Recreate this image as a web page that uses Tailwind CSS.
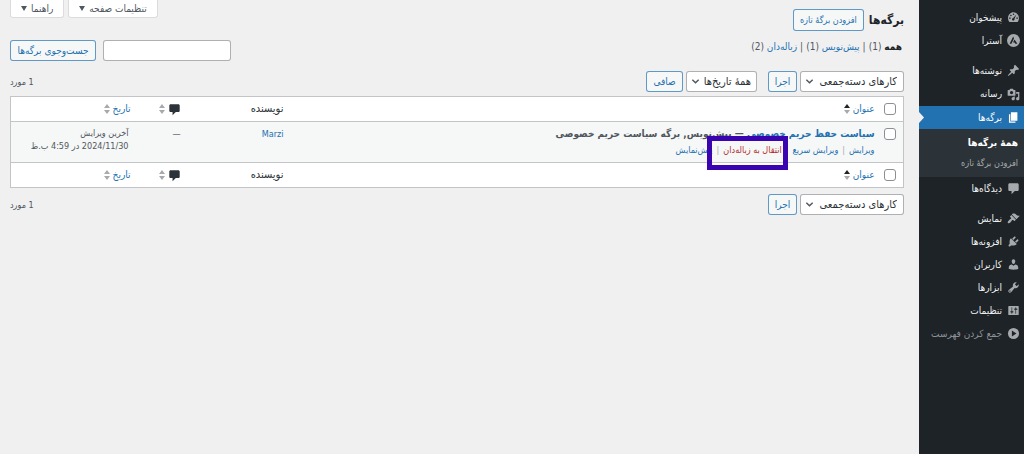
<!DOCTYPE html>
<html lang="fa" dir="rtl">

<head>
    <meta charset="UTF-8">
    <meta name="viewport" content="width=device-width, initial-scale=1.0">
    <title>برگه‌ها</title>
    <script src="https://cdn.jsdelivr.net/npm/@tailwindcss/browser@4"></script>
</head>

<body class="flex min-h-screen bg-[#f0f0f1] font-['DejaVu_Sans_Condensed','DejaVu_Sans',sans-serif] text-[10px] leading-[14px] text-[#50575e]">
    <!-- Shared icon shapes -->
    <svg class="hidden">
        <symbol id="bubble" viewBox="0 0 20 20">
            <path d="M4 2h12c1.100 0 2 .9 2 2v8c0 1.100-.9 2-2 2h-4l-5 5v-5H4c-1.100 0-2-.9-2-2V4c0-1.100.9-2 2-2z" />
        </symbol>
        <symbol id="chevron" viewBox="0 0 10 10">
            <path d="M1.500 3L5 6.500 8.500 3" fill="none" stroke="#50575e" stroke-width="1.600" />
        </symbol>
        <symbol id="sort" viewBox="0 0 6 10">
            <path d="M3 0L6 4H0z" />
            <path d="M0 6h6L3 10z" fill="#a7aaad" />
        </symbol>
    </svg>

    <!-- Admin menu -->
    <nav class="w-[105px] shrink-0 bg-[#1d2327] pt-[6px] text-[#f0f0f1]">
        <a href="#" class="flex h-[23px] items-center gap-[5px] pr-1">
            <svg class="size-[13px] shrink-0 fill-[#a7aaad]" viewBox="0 0 20 20">
                <path d="M3.760 17h12.480c1.340-1.630 2.140-3.710 2.140-5.980C18.380 5.820 14.450 2 10 2S1.620 5.820 1.620 11.020c0 2.270.8 4.350 2.140 5.980z" />
                <g fill="#1d2327">
                    <circle cx="10" cy="5" r="1.200" />
                    <circle cx="6" cy="7" r="1.200" />
                    <circle cx="4.500" cy="11" r="1.200" />
                    <circle cx="15.500" cy="11" r="1.200" />
                    <path d="M14.500 5.500L11.500 12a2 2 0 1 1-2-1.200z" />
                </g>
            </svg>
            پیشخوان
        </a>
        <a href="#" class="flex h-[23px] items-center gap-[5px] pr-1">
            <svg class="size-[13px] shrink-0" viewBox="0 0 20 20">
                <circle cx="10" cy="10" r="10" fill="#a7aaad" />
                <path d="M9.500 4L4 15h2.800L10.800 7zM11.500 8.500L9.300 13h2.500l.9 2H16z" fill="#1d2327" />
            </svg>
            آسترا
        </a>
        <a href="#" class="mt-[7px] flex h-[23px] items-center gap-[5px] pr-1">
            <svg class="size-[13px] shrink-0 fill-[#a7aaad]" viewBox="0 0 20 20">
                <path d="M10.440 3.020l1.820-1.820 6.360 6.350-1.830 1.820c-1.050-.68-2.480-.57-3.410.36l-.75.75c-.92.93-1.040 2.350-.35 3.410l-1.830 1.820-2.410-2.410-2.800 2.790c-.42.42-3.380 2.710-3.800 2.290s1.860-3.390 2.280-3.810l2.790-2.790L4.100 9.360l1.830-1.820c1.050.69 2.480.57 3.400-.36l.75-.75c.93-.92 1.050-2.350.36-3.410z" />
            </svg>
            نوشته‌ها
        </a>
        <a href="#" class="flex h-6 items-center gap-[5px] pr-1">
            <svg class="size-[13px] shrink-0 fill-[#a7aaad]" viewBox="0 0 20 20">
                <path d="M13 11V4c0-.55-.45-1-1-1h-1.670L9 1H5L3.670 3H2c-.55 0-1 .45-1 1v7c0 .55.45 1 1 1h10c.55 0 1-.45 1-1zM7 4.500c1.380 0 2.500 1.120 2.500 2.500S8.380 9.500 7 9.500 4.500 8.380 4.500 7 5.620 4.500 7 4.500zM14 6h5v10.500c0 1.380-1.120 2.500-2.500 2.500S14 17.880 14 16.500s1.120-2.500 2.500-2.500c.17 0 .34.02.5.05V9h-3V6zm-4 8.050V13h2v3.500c0 1.380-1.120 2.500-2.500 2.500S7 17.880 7 16.500 8.120 14 9.500 14c.17 0 .34.02.5.05z" />
            </svg>
            رسانه
        </a>
        <a href="#" class="relative flex h-[23px] items-center gap-[5px] bg-[#2271b1] pr-1 text-white">
            <svg class="size-[13px] shrink-0 fill-white" viewBox="0 0 20 20">
                <path d="M6 15V2h10v13H6zm-1 1h8v2H3V5h2v11z" />
            </svg>
            برگه‌ها
            <svg class="absolute left-0 top-[6px] h-[11px] w-[5px] fill-[#f0f0f1]" viewBox="0 0 5 11">
                <path d="M0 0l5 5.500L0 11z" />
            </svg>
        </a>
        <div class="flex flex-col bg-[#2c3338] py-1 pr-[6px] leading-5 text-[#a9adb1]">
            <a href="#" class="font-bold text-white">همهٔ برگه‌ها</a>
            <a href="#" class="text-[9px]">افزودن برگهٔ تازه</a>
        </div>
        <a href="#" class="flex h-[23px] items-center gap-[5px] pr-1">
            <svg class="size-[13px] shrink-0 fill-[#a7aaad]">
                <use href="#bubble" />
            </svg>
            دیدگاه‌ها
        </a>
        <a href="#" class="mt-[7px] flex h-[23px] items-center gap-[5px] pr-1">
            <svg class="size-[13px] shrink-0 fill-[#a7aaad]" viewBox="0 0 20 20">
                <path d="M14.480 11.060L7.410 3.990l1.500-1.500c.5-.56 2.300-.47 3.510.32 1.210.8 1.430 1.280 2.910 2.100 1.180.64 2.450 1.260 4.450.85zm-.71.71L6.700 4.700 4.930 6.470c-.39.39-.39 1.020 0 1.410l1.060 1.060c.39.39.39 1.030 0 1.420-.6.6-1.430 1.110-2.210 1.690-.35.26-.7.53-1.010.84C1.430 14.230.4 16.080 1.400 17.070c.99 1 2.840-.03 4.180-1.360.31-.31.58-.66.85-1.020.57-.78 1.080-1.610 1.690-2.210.39-.39 1.020-.39 1.410 0l1.060 1.060c.39.39 1.020.39 1.410 0z" />
            </svg>
            نمایش
        </a>
        <a href="#" class="flex h-[23px] items-center gap-[5px] pr-1">
            <svg class="size-[13px] shrink-0 fill-[#a7aaad]" viewBox="0 0 20 20">
                <path d="M13.110 4.360L9.870 7.600 8 5.730l3.240-3.240c.35-.34 1.050-.2 1.560.32.52.51.66 1.210.31 1.550zm-8 1.770l.91-1.120 9.010 9.010-1.190.84c-.71.71-2.630 1.160-3.820 1.160H6.140L4.900 17.260c-.59.59-1.540.59-2.120 0-.59-.58-.59-1.530 0-2.120l1.240-1.240v-3.880c0-1.130.4-3.190 1.090-3.890zm7.260 3.970l3.240-3.240c.34-.35 1.040-.21 1.550.31.52.51.66 1.210.31 1.550l-3.240 3.250z" />
            </svg>
            افزونه‌ها
        </a>
        <a href="#" class="flex h-[23px] items-center gap-[5px] pr-1">
            <svg class="size-[13px] shrink-0 fill-[#a7aaad]" viewBox="0 0 20 20">
                <path d="M10 9.250c-2.270 0-2.730-3.440-2.730-3.440C7 4.020 7.820 2 9.970 2c2.160 0 2.980 2.020 2.710 3.810 0 0-.41 3.440-2.680 3.440zm0 2.570L12.720 10c2.390 0 4.520 2.330 4.520 4.530v2.490s-3.650 1.130-7.240 1.130c-3.650 0-7.240-1.130-7.240-1.130v-2.490c0-2.250 1.940-4.480 4.470-4.480z" />
            </svg>
            کاربران
        </a>
        <a href="#" class="flex h-[23px] items-center gap-[5px] pr-1">
            <svg class="size-[13px] shrink-0 fill-[#a7aaad]" viewBox="0 0 20 20">
                <path d="M16.680 9.770c-1.340 1.340-3.300 1.670-4.950.99l-5.410 6.520c-.99.99-2.590.99-3.580 0s-.99-2.590 0-3.570l6.520-5.420c-.68-1.650-.35-3.610.99-4.950 1.280-1.280 3.120-1.620 4.720-1.060l-2.890 2.890 2.820 2.820 2.860-2.870c.53 1.580.18 3.390-1.080 4.650zM3.810 16.210c.4.39 1.040.39 1.430 0 .4-.4.4-1.040 0-1.430-.39-.4-1.030-.4-1.430 0-.39.39-.39 1.030 0 1.430z" />
            </svg>
            ابزارها
        </a>
        <a href="#" class="flex h-[23px] items-center gap-[5px] pr-1">
            <svg class="size-[13px] shrink-0 fill-[#a7aaad]" viewBox="0 0 20 20">
                <path d="M18 16V4c0-.55-.45-1-1-1H3c-.55 0-1 .45-1 1v12c0 .55.45 1 1 1h14c.55 0 1-.45 1-1zM8 11h1c.55 0 1 .45 1 1s-.45 1-1 1H8v1.500c0 .28-.22.5-.5.5s-.5-.22-.5-.5V13H6c-.55 0-1-.45-1-1s.45-1 1-1h1V5.500c0-.28.22-.5.5-.5s.5.22.5.5V11zm5-2h-1c-.55 0-1-.45-1-1s.45-1 1-1h1V5.500c0-.28.22-.5.5-.5s.5.22.5.5V7h1c.55 0 1 .45 1 1s-.45 1-1 1h-1v5.500c0 .28-.22.5-.5.5s-.5-.22-.5-.5V9z" />
            </svg>
            تنظیمات
        </a>
        <button type="button" class="flex h-[23px] w-full items-center gap-[5px] pr-1 text-[#8c9196]">
            <svg class="size-[13px] shrink-0" viewBox="0 0 20 20">
                <circle cx="10" cy="10" r="8.500" fill="#a7aaad" />
                <path d="M7.500 5.500l7 4.500-7 4.500z" fill="#1d2327" />
            </svg>
            جمع کردن فهرست
        </button>
    </nav>

    <!-- Page content -->
    <main class="min-w-0 grow pl-[10px] pr-[15px]">
        <header class="flex h-10 items-start justify-between">
            <div class="flex items-center gap-[5px] pt-[9px]">
                <h1 class="text-[12px] font-bold leading-[22px] text-[#1d2327]">برگه‌ها</h1>
                <a href="#" class="rounded-[3px] border border-[#2271b1]/70 bg-[#f6f7f7] px-[6px] py-[3px] text-[9px] text-[#2271b1]">افزودن برگهٔ تازه</a>
            </div>
            <div class="flex gap-1">
                <button type="button" class="flex h-[18px] items-center gap-1 rounded-b-[3px] border border-t-0 border-[#dcdcde] bg-white px-[10px]">تنظیمات صفحه
                    <svg class="h-[5px] w-[6px] fill-[#50575e]" viewBox="0 0 6 5"><path d="M0 0h6L3 5z" /></svg>
                </button>
                <button type="button" class="flex h-[18px] items-center gap-1 rounded-b-[3px] border border-t-0 border-[#dcdcde] bg-white px-[10px]">راهنما
                    <svg class="h-[5px] w-[6px] fill-[#50575e]" viewBox="0 0 6 5"><path d="M0 0h6L3 5z" /></svg>
                </button>
            </div>
        </header>

        <div class="flex justify-between">
            <ul class="flex gap-[3px] pr-[2px]">
                <li><a href="#" class="font-bold text-[#1d2327]">همه</a> (1)</li>
                <li>|</li>
                <li><a href="#" class="text-[#2271b1]">پیش‌نویس</a> (1)</li>
                <li>|</li>
                <li><a href="#" class="text-[#2271b1]">زباله‌دان</a> (2)</li>
            </ul>
            <form class="flex gap-[7px]">
                <input type="search" aria-label="جست‌وجوی برگه‌ها" class="h-[21px] w-32 rounded-[3px] border border-[#8c8f94]/70 bg-white px-1">
                <button type="button" class="h-[21px] w-[86px] rounded-[3px] border border-[#2271b1]/70 bg-[#f6f7f7] text-[#2271b1]">جست‌وجوی برگه‌ها</button>
            </form>
        </div>

        <div class="mt-[10px] flex items-center justify-between">
            <div class="flex gap-[3px]">
                <div class="relative">
                    <select aria-label="کارهای دسته‌جمعی" class="h-[21px] w-[104px] appearance-none rounded-[3px] border border-[#8c8f94]/70 bg-white pr-[6px] text-[11px] text-[#2c3338]">
                        <option>کارهای دسته‌جمعی</option>
                    </select>
                    <svg class="pointer-events-none absolute left-[5px] top-[6px] size-[9px]"><use href="#chevron" /></svg>
                </div>
                <button type="button" class="h-[21px] w-[29px] rounded-[3px] border border-[#2271b1]/70 bg-[#f6f7f7] text-[#2271b1]">اجرا</button>
                <div class="relative mr-2">
                    <select aria-label="همهٔ تاریخ‌ها" class="h-[21px] w-[71px] appearance-none rounded-[3px] border border-[#8c8f94]/70 bg-white pr-[5px] text-[11px] text-[#2c3338]">
                        <option>همهٔ تاریخ‌ها</option>
                    </select>
                    <svg class="pointer-events-none absolute left-[5px] top-[6px] size-[9px]"><use href="#chevron" /></svg>
                </div>
                <button type="button" class="h-[21px] w-[37px] rounded-[3px] border border-[#2271b1]/70 bg-[#f6f7f7] text-[#2271b1]">صافی</button>
            </div>
            <span class="text-[9px]">1 مورد</span>
        </div>

        <table class="mt-1 w-full table-fixed border-collapse border border-[#c3c4c7] bg-white text-right">
            <colgroup>
                <col class="w-[23px]">
                <col>
                <col class="w-[103px]">
                <col class="w-[50px]">
                <col class="w-[120px]">
            </colgroup>
            <thead>
                <tr class="h-[25px] border-b border-[#c3c4c7]">
                    <td class="pr-[7px]"><input type="checkbox" aria-label="گزینش همه" class="block size-3 appearance-none rounded-[3px] border border-[#8c8f94] bg-white"></td>
                    <th class="pr-[6px] font-normal text-[#2271b1]"><a href="#" class="flex items-center gap-[3px]">عنوان <svg class="h-[10px] w-[6px] fill-[#1d2327]"><use href="#sort" /></svg></a></th>
                    <th class="text-[11px] font-normal text-[#2c3338]">نویسنده</th>
                    <th><a href="#" aria-label="دیدگاه‌ها" class="flex items-center gap-[3px]"><svg class="size-[13px] fill-[#2c3338]"><use href="#bubble" /></svg><svg class="h-[10px] w-[6px] fill-[#a7aaad]"><use href="#sort" /></svg></a></th>
                    <th class="font-normal text-[#2271b1]"><a href="#" class="flex items-center gap-[3px]">تاریخ <svg class="h-[10px] w-[6px] fill-[#a7aaad]"><use href="#sort" /></svg></a></th>
                </tr>
            </thead>
            <tbody>
                <tr class="h-[41px] border-b border-[#c3c4c7] bg-[#f6f7f7] align-top">
                    <td class="pr-[7px] pt-[6px]"><input type="checkbox" aria-label="گزینش سیاست حفظ حریم خصوصی" class="block size-3 appearance-none rounded-[3px] border border-[#8c8f94] bg-white"></td>
                    <td class="whitespace-nowrap pr-[6px] pt-1">
                        <div class="font-bold leading-4"><a href="#" class="text-[#2271b1]">سیاست حفظ حریم خصوصی</a> — پیش‌نویس, برگه سیاست حریم خصوصی</div>
                        <div class="flex gap-1 text-[9px] leading-4 text-[#2271b1]">
                            <a href="#">ویرایش</a>
                            <span class="text-[#a7aaad]">|</span>
                            <a href="#">ویرایش سریع</a>
                            <span class="text-[#a7aaad]">|</span>
                            <!-- Highlighted action -->
                            <a href="#" class="relative text-[#b32d2e]">انتقال به زباله‌دان<span class="absolute -bottom-3 -left-4 -right-[6px] -top-[6px] border-[5px] border-[#3a04b0]"></span></a>
                            <span class="text-[#a7aaad]">|</span>
                            <a href="#">پیش‌نمایش</a>
                        </div>
                    </td>
                    <td class="pt-[5px] text-[9px]"><a href="#" class="text-[#2271b1]">Marzi</a></td>
                    <td class="pt-[5px] text-[9px]">—</td>
                    <td class="pr-[2px] pt-[5px] text-[9px] leading-[13px]">آخرین ویرایش<br>2024/11/30 در 4:59 ب.ظ</td>
                </tr>
            </tbody>
            <tfoot>
                <tr class="h-[25px]">
                    <td class="pr-[7px]"><input type="checkbox" aria-label="گزینش همه" class="block size-3 appearance-none rounded-[3px] border border-[#8c8f94] bg-white"></td>
                    <th class="pr-[6px] font-normal text-[#2271b1]"><a href="#" class="flex items-center gap-[3px]">عنوان <svg class="h-[10px] w-[6px] fill-[#1d2327]"><use href="#sort" /></svg></a></th>
                    <th class="text-[11px] font-normal text-[#2c3338]">نویسنده</th>
                    <th><a href="#" aria-label="دیدگاه‌ها" class="flex items-center gap-[3px]"><svg class="size-[13px] fill-[#2c3338]"><use href="#bubble" /></svg><svg class="h-[10px] w-[6px] fill-[#a7aaad]"><use href="#sort" /></svg></a></th>
                    <th class="font-normal text-[#2271b1]"><a href="#" class="flex items-center gap-[3px]">تاریخ <svg class="h-[10px] w-[6px] fill-[#a7aaad]"><use href="#sort" /></svg></a></th>
                </tr>
            </tfoot>
        </table>

        <div class="mt-[6px] flex items-center justify-between">
            <div class="flex gap-[3px]">
                <div class="relative">
                    <select aria-label="کارهای دسته‌جمعی" class="h-[21px] w-[104px] appearance-none rounded-[3px] border border-[#8c8f94]/70 bg-white pr-[6px] text-[11px] text-[#2c3338]">
                        <option>کارهای دسته‌جمعی</option>
                    </select>
                    <svg class="pointer-events-none absolute left-[5px] top-[6px] size-[9px]"><use href="#chevron" /></svg>
                </div>
                <button type="button" class="h-[21px] w-[29px] rounded-[3px] border border-[#2271b1]/70 bg-[#f6f7f7] text-[#2271b1]">اجرا</button>
            </div>
            <span class="text-[9px]">1 مورد</span>
        </div>
    </main>
</body>

</html>
